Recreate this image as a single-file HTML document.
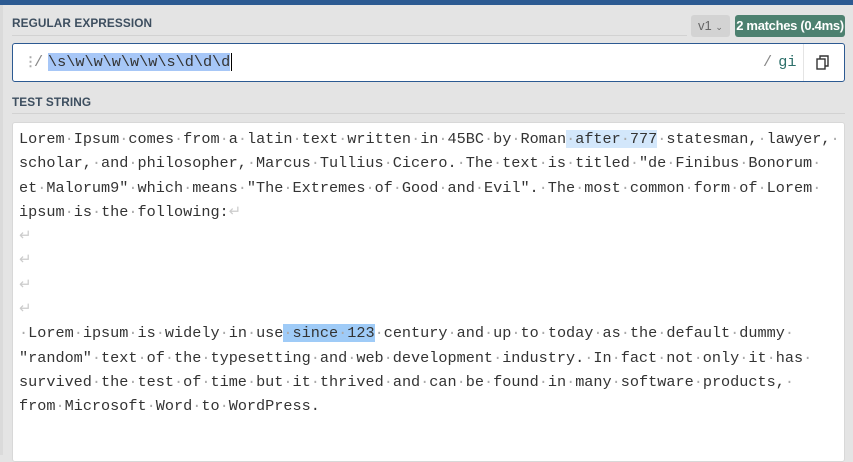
<!DOCTYPE html>
<html><head><meta charset="utf-8"><style>
*{margin:0;padding:0;box-sizing:border-box}
body{width:853px;height:455px;overflow:hidden;background:#e4e4e4;font-family:"Liberation Sans",sans-serif;position:relative}
.top{position:absolute;left:0;top:0;width:853px;height:5px;background:#2c5a92}
.lstrip{position:absolute;left:0;top:5px;width:3px;height:450px;background:#dadada}
.h{position:absolute;left:12px;font-size:11.8px;font-weight:bold;color:#3d4e5f;letter-spacing:0.1px}
.rule{position:absolute;left:12px;width:833px;height:1px;background:#d2d2d2}
.ver{position:absolute;left:691px;top:15px;width:39px;height:22px;background:#d3d3d3;border-radius:3px;color:#666;font-size:13px;line-height:22px;padding-left:7px}
.badge{position:absolute;left:735px;top:15px;width:110px;height:22px;background:#4d8170;border-radius:3px;color:#fff;font-size:13px;line-height:22px;text-align:center;font-weight:bold;letter-spacing:-0.3px}
.rx{position:absolute;left:12px;top:43px;width:833px;height:39px;background:#fff;border:1px solid #2c5a92;border-radius:3px}
.mono{font-family:"Liberation Mono",monospace;font-size:15.2px}
.rxt{position:absolute;left:35px;top:9px;color:#333}
.rxt .sel{background:#a7c7f7}
.flags{position:absolute;left:750px;top:9px;color:#888}
.flags b{font-weight:normal;color:#2d6f6a;margin-left:-3px}
.cp{position:absolute;left:790px;top:0;width:42px;height:37px;border-left:1px solid #e4e4e4}
.ta{position:absolute;left:12px;top:122px;width:833px;height:340px;background:#fff;border:1px solid #d8d8d8;border-radius:3px}
.txt{position:absolute;left:6px;top:4px;line-height:24.3px;white-space:pre;color:#333}
.d{color:#aaa}
.r{color:#ccc}
.m1{background:#d3e7fb}
.m2{background:#9fcbf7}
</style></head><body>
<div class="top"></div><div class="lstrip"></div>
<div class="h" style="top:16px">REGULAR EXPRESSION</div>
<div class="rule" style="top:35px;width:675px"></div>
<div class="ver">v1 <span style="font-size:9px">&#8964;</span></div>
<div class="badge">2 matches (0.4ms)</div>
<div class="rx">
<span style="position:absolute;left:11px;top:10px;color:#aaa;font-size:13px;font-weight:bold">&#8942;</span>
<span class="mono" style="position:absolute;left:21px;top:9px;color:#888">/</span>
<span class="mono rxt"><span class="sel">\s\w\w\w\w\w\s\d\d\d</span><span style="border-left:1px solid #000;margin-left:1px"></span></span>
<span class="mono flags">/ <b>gi</b></span>
<div class="cp"><svg width="42" height="37" viewBox="0 0 42 37"><rect x="13" y="15" width="8" height="10" fill="#fff" stroke="#333" stroke-width="1.4"/><path d="M16 15V12H24V22H21" fill="none" stroke="#333" stroke-width="1.4"/></svg></div>
</div>
<div class="h" style="top:95px">TEST STRING</div>
<div class="rule" style="top:113px"></div>
<div class="ta"><div class="mono txt">Lorem<span class="d">·</span>Ipsum<span class="d">·</span>comes<span class="d">·</span>from<span class="d">·</span>a<span class="d">·</span>latin<span class="d">·</span>text<span class="d">·</span>written<span class="d">·</span>in<span class="d">·</span>45BC<span class="d">·</span>by<span class="d">·</span>Roman<span class="m1"><span class="d">·</span>after<span class="d">·</span>777</span><span class="d">·</span>statesman,<span class="d">·</span>lawyer,<span class="d">·</span>
scholar,<span class="d">·</span>and<span class="d">·</span>philosopher,<span class="d">·</span>Marcus<span class="d">·</span>Tullius<span class="d">·</span>Cicero.<span class="d">·</span>The<span class="d">·</span>text<span class="d">·</span>is<span class="d">·</span>titled<span class="d">·</span>"de<span class="d">·</span>Finibus<span class="d">·</span>Bonorum<span class="d">·</span>
et<span class="d">·</span>Malorum9"<span class="d">·</span>which<span class="d">·</span>means<span class="d">·</span>"The<span class="d">·</span>Extremes<span class="d">·</span>of<span class="d">·</span>Good<span class="d">·</span>and<span class="d">·</span>Evil".<span class="d">·</span>The<span class="d">·</span>most<span class="d">·</span>common<span class="d">·</span>form<span class="d">·</span>of<span class="d">·</span>Lorem<span class="d">·</span>
ipsum<span class="d">·</span>is<span class="d">·</span>the<span class="d">·</span>following:<span class="r">↵</span>
<span class="r">↵</span>
<span class="r">↵</span>
<span class="r">↵</span>
<span class="r">↵</span>
<span class="d">·</span>Lorem<span class="d">·</span>ipsum<span class="d">·</span>is<span class="d">·</span>widely<span class="d">·</span>in<span class="d">·</span>use<span class="m2"><span class="d">·</span>since<span class="d">·</span>123</span><span class="d">·</span>century<span class="d">·</span>and<span class="d">·</span>up<span class="d">·</span>to<span class="d">·</span>today<span class="d">·</span>as<span class="d">·</span>the<span class="d">·</span>default<span class="d">·</span>dummy<span class="d">·</span>
"random"<span class="d">·</span>text<span class="d">·</span>of<span class="d">·</span>the<span class="d">·</span>typesetting<span class="d">·</span>and<span class="d">·</span>web<span class="d">·</span>development<span class="d">·</span>industry.<span class="d">·</span>In<span class="d">·</span>fact<span class="d">·</span>not<span class="d">·</span>only<span class="d">·</span>it<span class="d">·</span>has<span class="d">·</span>
survived<span class="d">·</span>the<span class="d">·</span>test<span class="d">·</span>of<span class="d">·</span>time<span class="d">·</span>but<span class="d">·</span>it<span class="d">·</span>thrived<span class="d">·</span>and<span class="d">·</span>can<span class="d">·</span>be<span class="d">·</span>found<span class="d">·</span>in<span class="d">·</span>many<span class="d">·</span>software<span class="d">·</span>products,<span class="d">·</span>
from<span class="d">·</span>Microsoft<span class="d">·</span>Word<span class="d">·</span>to<span class="d">·</span>WordPress.</div></div>
</body></html>
